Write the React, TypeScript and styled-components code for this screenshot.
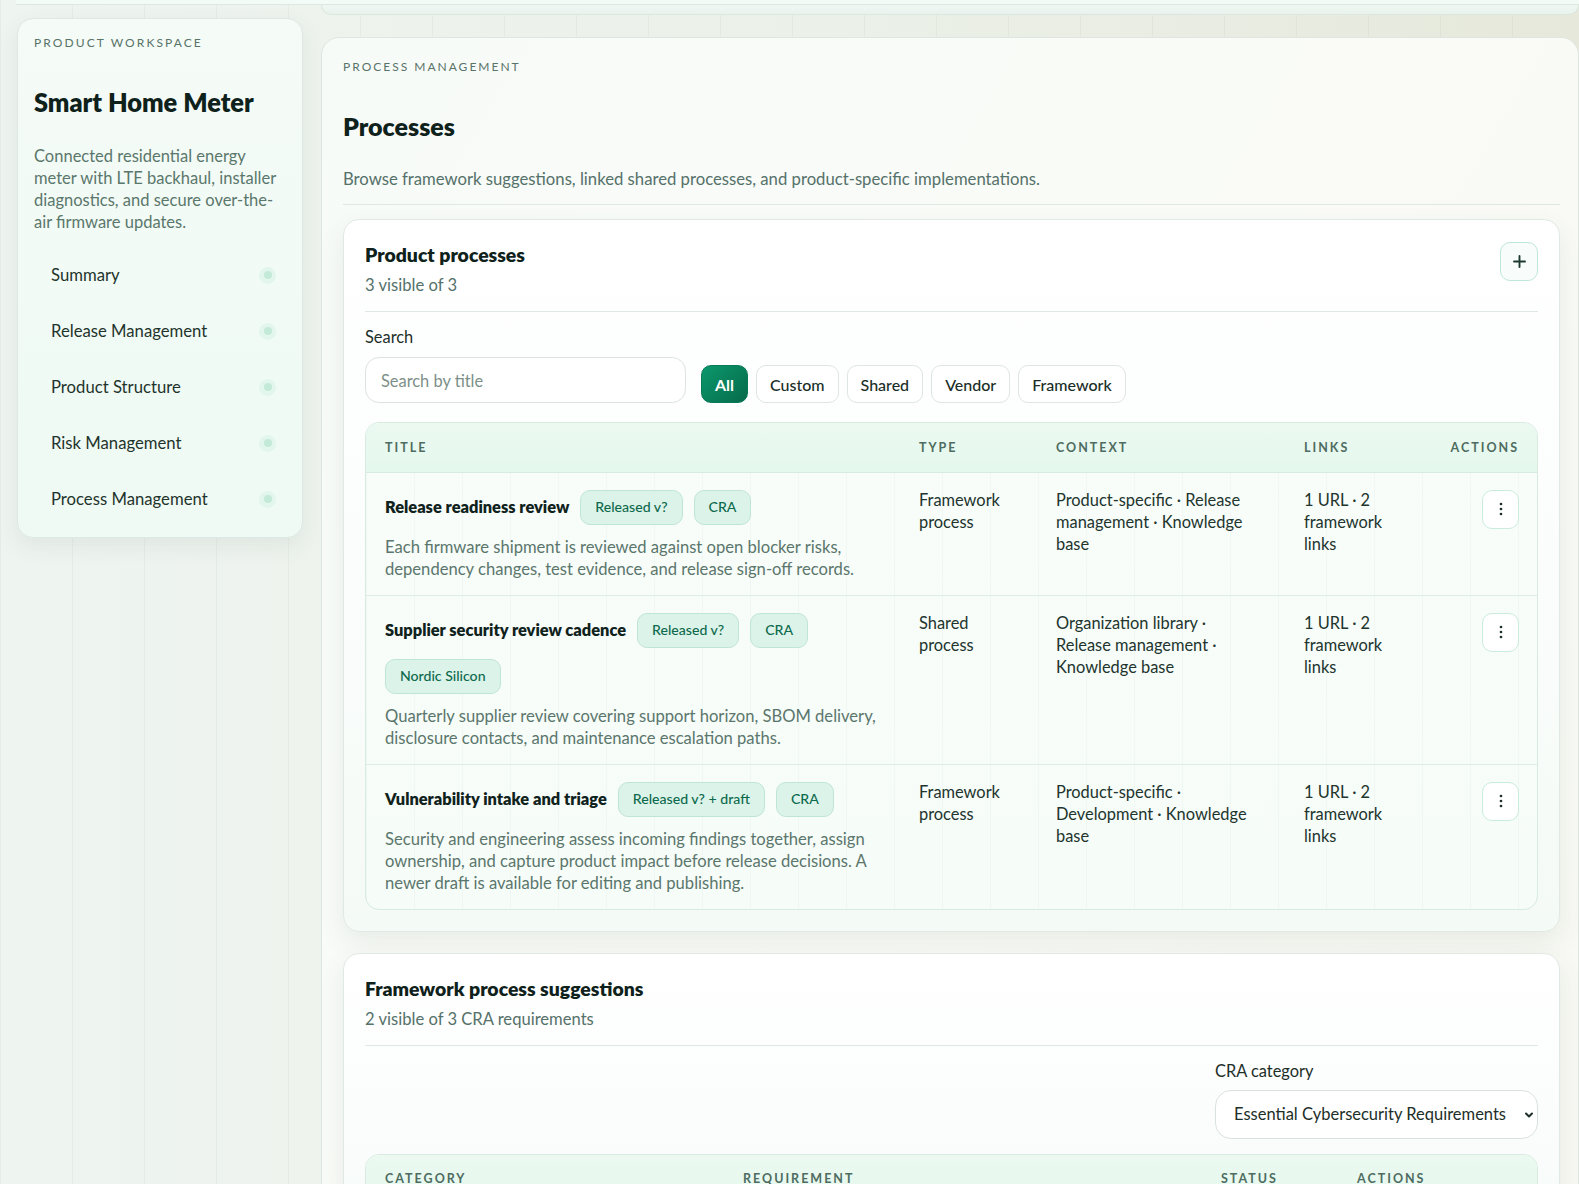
import React from "react";
import styled, { createGlobalStyle } from "styled-components";

const GlobalStyle = createGlobalStyle`
  html, body { margin: 0; padding: 0; }
  body {
    font-family: "Lato", "Noto Sans", sans-serif;
    color: #13251f;
    background-color: #edf3ee;
    background-image:
      repeating-linear-gradient(90deg, rgba(110, 140, 120, 0.07) 0 1px, transparent 1px 72px),
      linear-gradient(90deg, #eef4f0 0%, #ebf0e8 55%, #e6e8db 100%);
    min-height: 100vh;
    overflow: hidden;
  }
  * { box-sizing: border-box; }
`;

const Page = styled.div`
  display: flex;
  flex-direction: column;
  min-height: 100vh;
`;

const TopStrip = styled.div`
  margin-left: 16px;
  height: 5px;
  background: #f2fbf6;
  border-bottom: 1px solid #dce8e0;
`;

const Layout = styled.div`
  display: grid;
  grid-template-columns: 286px 1fr;
  column-gap: 18px;
  padding-left: 17px;
  align-items: start;
`;

const Sidebar = styled.aside`
  margin-top: 13px;
  background: linear-gradient(180deg, #f5fbf7 0%, #eefaf3 100%);
  border: 1px solid #dde9e2;
  border-radius: 16px;
  box-shadow: 0 8px 22px rgba(70, 95, 80, 0.08);
  padding: 17px 16px 16px;
  display: flex;
  flex-direction: column;
`;

const Eyebrow = styled.div<{ $spacing?: number }>`
  font-size: 12px;
  line-height: 14px;
  letter-spacing: ${(p) => p.$spacing ?? 2}px;
  text-transform: uppercase;
  color: #587368;
`;

const ProductName = styled.h1`
  margin: 37px 0 0;
  font-size: 25.4px;
  line-height: 30px;
  font-weight: 800;
  color: #0f211b;
`;

const SideDesc = styled.p`
  margin: 28px 0 0;
  font-size: 16.5px;
  line-height: 22px;
  color: #5a776c;
`;

const Nav = styled.nav`
  margin-top: 20px;
  display: flex;
  flex-direction: column;
  gap: 12px;
`;

const NavItem = styled.a`
  height: 44px;
  padding: 0 10px 0 17px;
  display: flex;
  align-items: center;
  justify-content: space-between;
  font-size: 16.7px;
  color: #1f342c;
  text-decoration: none;
`;

const NavDot = styled.span`
  width: 17px;
  height: 17px;
  border-radius: 50%;
  background: #e2f6ed;
  display: flex;
  align-items: center;
  justify-content: center;
  &::after {
    content: "";
    width: 8px;
    height: 8px;
    border-radius: 50%;
    background: #c3e9d9;
  }
`;

const MainCol = styled.div`
  display: flex;
  flex-direction: column;
  min-width: 0;
`;

const PrevCardTail = styled.div`
  height: 10px;
  background: linear-gradient(180deg, #eef7f1, #e9f2ec);
  border: 1px solid #dae6de;
  border-top: none;
  border-radius: 0 0 16px 16px;
`;

const MainPanel = styled.main`
  margin-top: 22px;
  background: linear-gradient(120deg, #f7fbf8 0%, #fafbf7 55%, #f7f8f2 100%);
  border: 1px solid #dde6e0;
  border-radius: 18px 18px 0 0;
  padding: 22px 18px 40px 21px;
  display: flex;
  flex-direction: column;
`;

const PageTitle = styled.h2`
  margin: 36px 0 0;
  font-size: 25px;
  line-height: 32px;
  font-weight: 800;
  color: #0f211b;
`;

const PageDesc = styled.p`
  margin: 25px 0 0;
  font-size: 16.7px;
  line-height: 24px;
  color: #55716a;
`;

const Divider = styled.hr<{ $top?: number }>`
  margin: ${(p) => p.$top ?? 13}px 0 0;
  border: none;
  height: 1px;
  background: #e0e8e3;
`;

const Card = styled.section<{ $top: number }>`
  margin-top: ${(p) => p.$top}px;
  background: linear-gradient(180deg, #ffffff 0%, #fbfdfc 50%, #f4faf6 100%);
  border: 1px solid #e1e9e4;
  border-radius: 16px;
  box-shadow: 0 10px 26px rgba(70, 90, 70, 0.09);
  padding: 21px 21px 21px;
  display: flex;
  flex-direction: column;
`;

const CardHeader = styled.div`
  display: flex;
  justify-content: space-between;
  align-items: flex-start;
`;

const CardTitle = styled.h3`
  margin: 0;
  font-size: 19.4px;
  line-height: 28px;
  font-weight: 800;
  color: #0f211b;
`;

const CardSub = styled.div`
  margin-top: 5px;
  font-size: 16.6px;
  line-height: 22px;
  color: #55716a;
`;

const IconButton = styled.button`
  margin-top: 1px;
  width: 38px;
  height: 39px;
  border-radius: 10px;
  border: 1px solid #bfe7d7;
  background: #f8fdfb;
  display: flex;
  align-items: center;
  justify-content: center;
  color: #1c3a30;
  padding: 0;
`;

const Toolbar = styled.div<{ $end?: boolean }>`
  margin-top: 15px;
  display: flex;
  align-items: flex-end;
  justify-content: ${(p) => (p.$end ? "flex-end" : "flex-start")};
  gap: 15px;
`;

const Field = styled.label<{ $width: number; $gap: number }>`
  display: flex;
  flex-direction: column;
  gap: ${(p) => p.$gap}px;
  width: ${(p) => p.$width}px;
  font-size: 16.4px;
  line-height: 20px;
  color: #1c2f28;
`;

const SearchInput = styled.input`
  height: 46px;
  border-radius: 14px;
  border: 1px solid #dbe4df;
  background: #ffffff;
  padding: 0 15px;
  font-family: inherit;
  font-size: 16.4px;
  color: #1c2f28;
  outline: none;
  &::placeholder { color: #7c8f88; }
`;

const FilterGroup = styled.div`
  display: flex;
  gap: 8px;
`;

const FilterButton = styled.button<{ $active?: boolean }>`
  height: 38px;
  padding: 0 13px;
  border-radius: 10px;
  font-family: inherit;
  font-size: 16px;
  font-weight: ${(p) => (p.$active ? 700 : 500)};
  color: ${(p) => (p.$active ? "#ffffff" : "#1a2e27")};
  border: 1px solid ${(p) => (p.$active ? "#087a57" : "#dde6e1")};
  background: ${(p) => (p.$active ? "linear-gradient(135deg, #0c986c 0%, #066a4b 100%)" : "#ffffff")};
`;

const TableWrap = styled.div<{ $top: number }>`
  margin-top: ${(p) => p.$top}px;
  border: 1px solid #d8ebe1;
  border-radius: 14px;
  overflow: hidden;
  background:
    repeating-linear-gradient(90deg, rgba(120, 160, 140, 0.05) 0 1px, transparent 1px 48px),
    linear-gradient(180deg, #f8fdfa, #f6fcf8);
`;

const Table = styled.table`
  width: 100%;
  border-collapse: collapse;
  table-layout: fixed;
`;

const Th = styled.th<{ $align?: string }>`
  height: 49px;
  padding: 0 19px;
  text-align: ${(p) => p.$align ?? "left"};
  font-size: 12.5px;
  font-weight: 700;
  letter-spacing: 2px;
  text-transform: uppercase;
  color: #4e6c61;
  background: linear-gradient(180deg, #ebf9f1 0%, #e5f8ed 100%);
  border-bottom: 1px solid #d7ebe0;
`;

const Tr = styled.tr`
  & + & td { border-top: 1px solid #e0ede6; }
`;

const Td = styled.td<{ $align?: string; $padRight?: number }>`
  padding: 16px ${(p) => p.$padRight ?? 19}px 15px 19px;
  vertical-align: top;
  text-align: ${(p) => p.$align ?? "left"};
  font-size: 16.4px;
  line-height: 22px;
  color: #21342d;
`;

const TitleLine = styled.div`
  display: flex;
  flex-wrap: wrap;
  align-items: center;
  gap: 11px;
  padding-top: 1px;
`;

const RowTitle = styled.span`
  font-size: 16.4px;
  font-weight: 800;
  color: #10221c;
`;

const Badge = styled.span`
  height: 35px;
  display: inline-flex;
  align-items: center;
  padding: 0 14px;
  border-radius: 10px;
  border: 1px solid #bfe5d5;
  background: #dcf3ea;
  color: #0e6a4c;
  font-size: 14.1px;
  font-weight: 500;
`;

const RowDesc = styled.p`
  margin: 11px 0 0;
  font-size: 16.6px;
  line-height: 22px;
  color: #5b766c;
`;

const KebabButton = styled.button`
  margin-top: 1px;
  width: 37px;
  height: 39px;
  border-radius: 10px;
  border: 1px solid #c9ecdd;
  background: #ffffff;
  display: inline-flex;
  align-items: center;
  justify-content: center;
  padding: 0;
  color: #1c2f28;
`;

const SelectWrap = styled.div`
  position: relative;
  height: 49px;
`;

const Select = styled.select`
  width: 100%;
  height: 49px;
  appearance: none;
  border-radius: 16px;
  border: 1px solid #d9e3de;
  background: #ffffff;
  padding: 0 30px 0 18px;
  font-family: inherit;
  font-size: 16.5px;
  color: #1c2f28;
`;

const Chevron = styled.svg`
  position: absolute;
  right: 3px;
  top: 19px;
  pointer-events: none;
`;

const Kebab = () => (
  <svg width="4" height="14" viewBox="0 0 4 14" fill="currentColor">
    <circle cx="2" cy="2" r="1.35" />
    <circle cx="2" cy="7" r="1.35" />
    <circle cx="2" cy="12" r="1.35" />
  </svg>
);

const PlusIcon = () => (
  <svg width="13" height="13" viewBox="0 0 13 13" stroke="currentColor" strokeWidth="1.9" strokeLinecap="round">
    <line x1="6.5" y1="1" x2="6.5" y2="12" />
    <line x1="1" y1="6.5" x2="12" y2="6.5" />
  </svg>
);

const navItems = ["Summary", "Release Management", "Product Structure", "Risk Management", "Process Management"];

const rows = [
  {
    title: "Release readiness review",
    badges: ["Released v?", "CRA"],
    desc: "Each firmware shipment is reviewed against open blocker risks, dependency changes, test evidence, and release sign-off records.",
    type: "Framework process",
    context: "Product-specific · Release management · Knowledge base",
  },
  {
    title: "Supplier security review cadence",
    badges: ["Released v?", "CRA", "Nordic Silicon"],
    desc: "Quarterly supplier review covering support horizon, SBOM delivery, disclosure contacts, and maintenance escalation paths.",
    type: "Shared process",
    context: "Organization library · Release management · Knowledge base",
  },
  {
    title: "Vulnerability intake and triage",
    badges: ["Released v? + draft", "CRA"],
    desc: "Security and engineering assess incoming findings together, assign ownership, and capture product impact before release decisions. A newer draft is available for editing and publishing.",
    type: "Framework process",
    context: "Product-specific · Development · Knowledge base",
  },
];

const filters = ["All", "Custom", "Shared", "Vendor", "Framework"];

export default function App() {
  return (
    <Page>
      <GlobalStyle />
      <TopStrip />
      <Layout>
        <Sidebar>
          <Eyebrow $spacing={2.1}>Product workspace</Eyebrow>
          <ProductName>Smart Home Meter</ProductName>
          <SideDesc>
            Connected residential energy meter with LTE backhaul, installer diagnostics, and secure over-the-air
            firmware updates.
          </SideDesc>
          <Nav>
            {navItems.map((item) => (
              <NavItem key={item}>
                {item}
                <NavDot />
              </NavItem>
            ))}
          </Nav>
        </Sidebar>

        <MainCol>
          <PrevCardTail />
          <MainPanel>
            <Eyebrow>Process management</Eyebrow>
            <PageTitle>Processes</PageTitle>
            <PageDesc>
              Browse framework suggestions, linked shared processes, and product-specific implementations.
            </PageDesc>
            <Divider />

            <Card $top={14}>
              <CardHeader>
                <div>
                  <CardTitle>Product processes</CardTitle>
                  <CardSub>3 visible of 3</CardSub>
                </div>
                <IconButton aria-label="Add process">
                  <PlusIcon />
                </IconButton>
              </CardHeader>
              <Divider $top={15} />
              <Toolbar>
                <Field $width={321} $gap={10}>
                  Search
                  <SearchInput placeholder="Search by title" />
                </Field>
                <FilterGroup>
                  {filters.map((f, i) => (
                    <FilterButton key={f} $active={i === 0}>
                      {f}
                    </FilterButton>
                  ))}
                </FilterGroup>
              </Toolbar>
              <TableWrap $top={19}>
                <Table>
                  <colgroup>
                    <col style={{ width: 534 }} />
                    <col style={{ width: 137 }} />
                    <col style={{ width: 248 }} />
                    <col style={{ width: 133 }} />
                    <col style={{ width: 120 }} />
                  </colgroup>
                  <thead>
                    <tr>
                      <Th>Title</Th>
                      <Th>Type</Th>
                      <Th>Context</Th>
                      <Th>Links</Th>
                      <Th $align="right">Actions</Th>
                    </tr>
                  </thead>
                  <tbody>
                    {rows.map((r) => (
                      <Tr key={r.title}>
                        <Td>
                          <TitleLine>
                            <RowTitle>{r.title}</RowTitle>
                            {r.badges.map((b) => (
                              <Badge key={b}>{b}</Badge>
                            ))}
                          </TitleLine>
                          <RowDesc>{r.desc}</RowDesc>
                        </Td>
                        <Td $padRight={28}>{r.type}</Td>
                        <Td $padRight={30}>{r.context}</Td>
                        <Td>1 URL · 2 framework links</Td>
                        <Td $align="right">
                          <KebabButton aria-label="Actions">
                            <Kebab />
                          </KebabButton>
                        </Td>
                      </Tr>
                    ))}
                  </tbody>
                </Table>
              </TableWrap>
            </Card>

            <Card $top={21}>
              <CardHeader>
                <div>
                  <CardTitle>Framework process suggestions</CardTitle>
                  <CardSub>2 visible of 3 CRA requirements</CardSub>
                </div>
              </CardHeader>
              <Divider $top={15} />
              <Toolbar $end>
                <Field $width={323} $gap={9}>
                  CRA category
                  <SelectWrap>
                    <Select defaultValue="ecr">
                      <option value="ecr">Essential Cybersecurity Requirements</option>
                      <option value="vh">Vulnerability Handling</option>
                    </Select>
                    <Chevron width="12" height="12" viewBox="0 0 12 12" fill="none" stroke="#1c2f28" strokeWidth="2" strokeLinecap="round" strokeLinejoin="round">
                      <polyline points="3,4.5 6,7.5 9,4.5" />
                    </Chevron>
                  </SelectWrap>
                </Field>
              </Toolbar>
              <TableWrap $top={15}>
                <Table>
                  <colgroup>
                    <col style={{ width: 358 }} />
                    <col style={{ width: 478 }} />
                    <col style={{ width: 136 }} />
                    <col style={{ width: 200 }} />
                  </colgroup>
                  <thead>
                    <tr>
                      <Th>Category</Th>
                      <Th>Requirement</Th>
                      <Th>Status</Th>
                      <Th>Actions</Th>
                    </tr>
                  </thead>
                  <tbody>
                    <Tr>
                      <Td>Essential Cybersecurity Requirements</Td>
                      <Td>Secure by default configuration</Td>
                      <Td>Suggested</Td>
                      <Td />
                    </Tr>
                  </tbody>
                </Table>
              </TableWrap>
            </Card>
          </MainPanel>
        </MainCol>
      </Layout>
    </Page>
  );
}
